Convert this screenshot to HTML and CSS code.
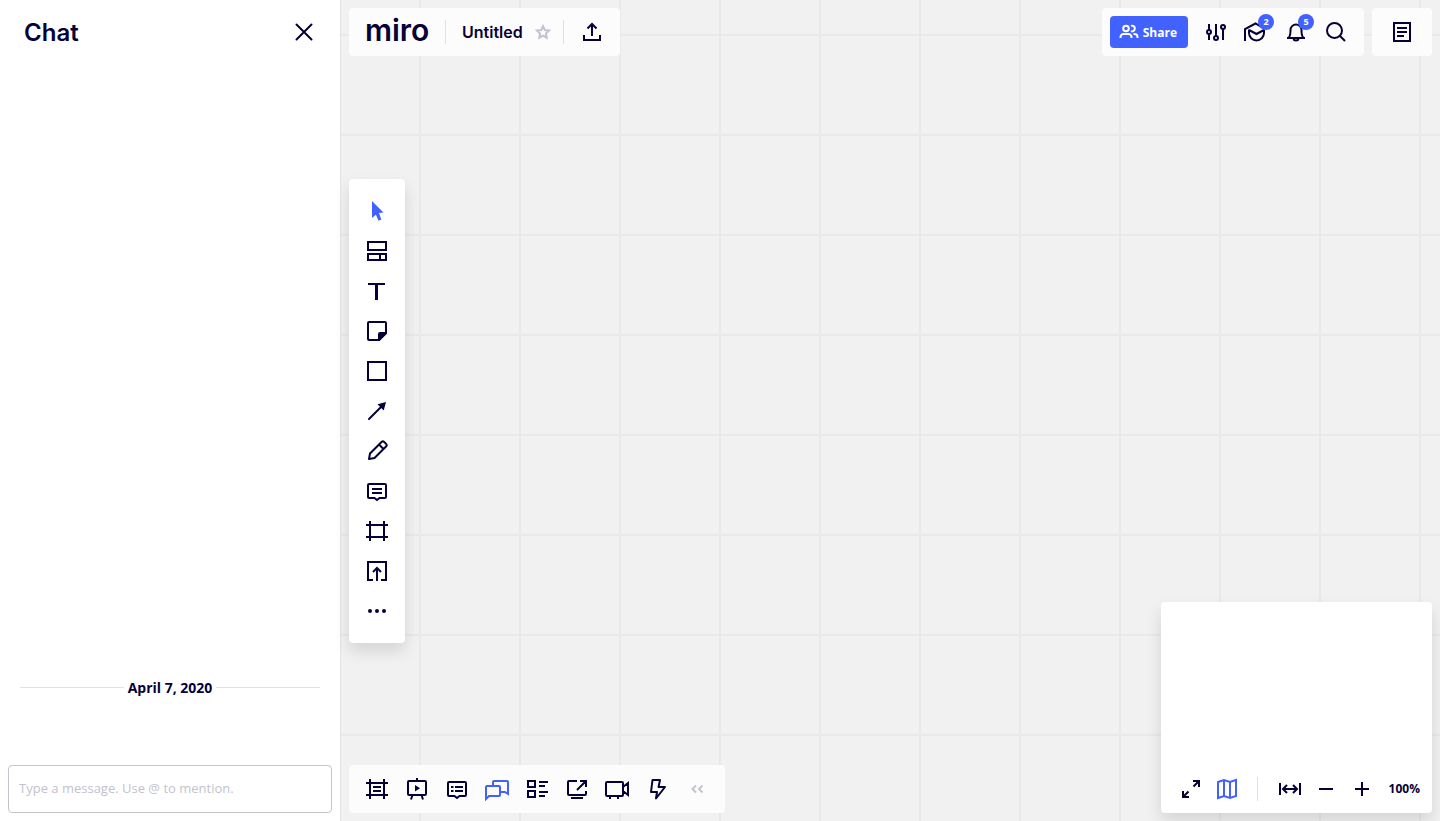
FILE: index.html
```
<!DOCTYPE html>
<html lang="en">
<head>
<meta charset="utf-8">
<title>Untitled board</title>
<link rel="stylesheet" href="styles.css">
</head>
<body>
<div class="app">
  <aside class="chat">
    <header class="chat-head">
      <h2 class="chat-title">Chat</h2>
      <button class="tool" aria-label="Close chat"><svg class="icon" viewBox="0 0 24 24"><path d="M4.500 4.500l15 15M19.500 4.500l-15 15" stroke-linecap="round"/></svg></button>
    </header>
    <div class="chat-log">
      <div class="chat-date"><span class="chat-day">April 7, 2020</span></div>
    </div>
    <form class="chat-form">
      <input class="chat-input" type="text" aria-label="Message" placeholder="Type a message. Use @ to mention.">
    </form>
  </aside>

  <main class="board">
    <div class="side side-left">
      <header class="bar board-head">
        <a class="logo" href="#">miro</a>
        <span class="divider"></span>
        <h1 class="board-name">Untitled</h1>
        <button class="star" aria-label="Star board"><svg class="star-icon" viewBox="0 0 16 16"><path d="M8 2.200l1.800 3.900 4.200.5-3.100 2.900.8 4.200L8 11.600l-3.700 2.100.8-4.200L2 6.600l4.200-.5z"/></svg></button>
        <span class="divider"></span>
        <button class="tool export" aria-label="Export"><svg class="icon" viewBox="0 0 24 24"><path d="M12 16V4M7.500 8.500L12 4l4.500 4.500M4 15v5h16v-5"/></svg></button>
      </header>

      <nav class="tools" aria-label="Tools">
        <button class="tool active" aria-label="Select"><svg class="icon" viewBox="0 0 24 24"><path class="solid" d="M7 2l11.500 11.500-4.500.5 2.300 6.500-2.800 1.200-2.600-6L7 19z"/></svg></button>
        <button class="tool" aria-label="Templates"><svg class="icon" viewBox="0 0 24 24"><path d="M3 3h18v8H3zM3 15h18v6H3zM15 15v6"/></svg></button>
        <button class="tool" aria-label="Text"><svg class="icon" viewBox="0 0 24 24"><rect class="solid" x="3" y="4" width="17" height="2"/><rect class="solid" x="10" y="4" width="3" height="17"/></svg></button>
        <button class="tool" aria-label="Sticky note"><svg class="icon" viewBox="0 0 24 24"><path d="M21 14V4a1 1 0 0 0-1-1H4a1 1 0 0 0-1 1v16a1 1 0 0 0 1 1h10z"/><path class="solid" d="M13 22v-7a2 2 0 0 1 2-2h7v1.500L14.500 22z"/></svg></button>
        <button class="tool" aria-label="Shape"><svg class="icon" viewBox="0 0 24 24"><path d="M3 3h18v18H3z"/></svg></button>
        <button class="tool" aria-label="Connection line"><svg class="icon" viewBox="0 0 24 24"><path d="M4 20L18 6" stroke-linecap="round"/><path class="solid" d="M21 3l-2.300 8.500-6.200-6.200z"/></svg></button>
        <button class="tool" aria-label="Pen"><svg class="icon" viewBox="0 0 24 24"><path stroke-linejoin="round" d="M4 20l1-5.500L16.800 2.700a1.500 1.500 0 0 1 2.100 0l2.400 2.400a1.500 1.500 0 0 1 0 2.100L9.500 19zM14 5.500l4.500 4.500"/></svg></button>
        <button class="tool" aria-label="Comment"><svg class="icon" viewBox="0 0 24 24"><path d="M4 5h16a1 1 0 0 1 1 1v12a1 1 0 0 1-1 1h-5.500L12 21l-2.500-2H4a1 1 0 0 1-1-1V6a1 1 0 0 1 1-1zM7 10h10M7 14h10"/></svg></button>
        <button class="tool" aria-label="Frame"><svg class="icon" viewBox="0 0 24 24"><path d="M5 2v20M19 2v20M1 6h22M1 18h22"/></svg></button>
        <button class="tool" aria-label="Upload"><svg class="icon" viewBox="0 0 24 24"><path d="M8 21H3V3h18v18h-5M12 22V9M8 13l4-4 4 4"/></svg></button>
        <button class="tool" aria-label="More"><svg class="icon" viewBox="0 0 24 24"><circle class="solid" cx="5" cy="12" r="2"/><circle class="solid" cx="12" cy="12" r="2"/><circle class="solid" cx="19" cy="12" r="2"/></svg></button>
      </nav>

      <nav class="bar dock" aria-label="Collaboration">
        <button class="tool" aria-label="Frames"><svg class="icon" viewBox="0 0 24 24"><path d="M5 2v20M19 2v20M1 6h22M1 18h22M8 10h8M8 14h8"/></svg></button>
        <button class="tool" aria-label="Presentation"><svg class="icon" viewBox="0 0 24 24"><path d="M4 4h16a1 1 0 0 1 1 1v12a1 1 0 0 1-1 1H4a1 1 0 0 1-1-1V5a1 1 0 0 1 1-1zM12 4V1M7.500 18L6 22.500M16.500 18l1.500 4.500"/><path class="solid" d="M10 8l5 3.300-5 3.200z"/></svg></button>
        <button class="tool" aria-label="Comments"><svg class="icon" viewBox="0 0 24 24"><path d="M4 5h16a1 1 0 0 1 1 1v12a1 1 0 0 1-1 1h-5.500L12 21l-2.500-2H4a1 1 0 0 1-1-1V6a1 1 0 0 1 1-1zM6 10h2.500M10 10h8M6 14h2.500M10 14h8"/></svg></button>
        <button class="tool active" aria-label="Chat"><svg class="icon" viewBox="0 0 24 24"><path d="M1 22V10a1 1 0 0 1 1-1h12a1 1 0 0 1 1 1v8a1 1 0 0 1-1 1H4zM8 9V5a1 1 0 0 1 1-1h13a1 1 0 0 1 1 1v12l-3-2h-5"/></svg></button>
        <button class="tool" aria-label="Cards"><svg class="icon" viewBox="0 0 24 24"><path d="M3 4h7v6H3zM3 14h7v6H3zM14 5h9M14 9h6M14 15h9M14 19h6"/></svg></button>
        <button class="tool" aria-label="Screen sharing"><svg class="icon" viewBox="0 0 24 24"><path d="M12 4H4a1 1 0 0 0-1 1v12a1 1 0 0 0 1 1h16a1 1 0 0 0 1-1v-3M6 21h12M12 13l9-9M15 4h6v6"/></svg></button>
        <button class="tool" aria-label="Video chat"><svg class="icon" viewBox="0 0 24 24"><path d="M2 5h15a1 1 0 0 1 1 1v12a1 1 0 0 1-1 1H2a1 1 0 0 1-1-1V6a1 1 0 0 1 1-1zM18 10l5-4v12l-5-4M5 19v3M13 19v3"/></svg></button>
        <button class="tool" aria-label="Activity"><svg class="icon" viewBox="0 0 24 24"><path d="M7.500 3H15l-1.500 7H20l-9 11.500L12 15H6z" stroke-linejoin="round"/></svg></button>
        <button class="tool muted" aria-label="Collapse"><svg class="icon" viewBox="0 0 24 24"><path d="M11 8.500L7.500 12l3.500 3.500M17.500 8.500L14 12l3.500 3.500"/></svg></button>
      </nav>
    </div>

    <div class="side side-right">
      <div class="top-right">
        <div class="bar actions">
          <button class="share"><svg class="share-icon" viewBox="0 0 20 16"><circle cx="7" cy="4.500" r="2.800"/><path d="M1.500 14v-1a3 3 0 0 1 3-3h5a3 3 0 0 1 3 3v1M12 1.900a2.800 2.800 0 1 1 0 5.200M14.500 10h1a3 3 0 0 1 3 3v1"/></svg>Share</button>
          <button class="tool" aria-label="Settings"><svg class="icon" viewBox="0 0 24 24"><path d="M5 4v5.500M5 14.500V20M12 4v11.500M19 9.500V20"/><circle cx="5" cy="12" r="2"/><circle cx="12" cy="18" r="2"/><circle cx="19" cy="7" r="2"/></svg></button>
          <button class="tool" aria-label="Learning center"><svg class="icon" viewBox="0 0 24 24"><path d="M1 21V9l10.500-5.500L20 8.500M5 10l7.500 4L20 10M5 9.500V13a7.500 7.500 0 0 0 15 0V9.500"/></svg><span class="badge">2</span></button>
          <button class="tool" aria-label="Notifications"><svg class="icon" viewBox="0 0 24 24"><path d="M3 18h18M4.500 18C6.500 16 6.500 14 6.500 10a5.500 5.500 0 0 1 11 0c0 4 0 6 2 8M9.500 18a2.500 2.500 0 0 0 5 0"/></svg><span class="badge">5</span></button>
          <button class="tool" aria-label="Search"><svg class="icon" viewBox="0 0 24 24"><circle cx="10.500" cy="10.500" r="7.500"/><path d="M16 16l5 5"/></svg></button>
        </div>
        <div class="bar notes">
          <button class="tool" aria-label="Notes"><svg class="icon" viewBox="0 0 24 24"><path d="M4 3h16v18H4zM7 8h10M7 12h10M7 16h7"/></svg></button>
        </div>
      </div>

      <section class="minimap" aria-label="Map">
        <div class="zoom-bar">
          <button class="tool small" aria-label="Full screen"><svg class="icon" viewBox="0 0 24 24"><path d="M14.500 9.500L20 4M14 4h6v6M9.500 14.500L4 20M4 14v6h6"/></svg></button>
          <button class="tool small active" aria-label="Toggle map"><svg class="icon" viewBox="0 0 24 24"><path d="M3 5l6-2 6 2 6-2v16l-6 2-6-2-6 2zM9 3v16M15 5v16"/></svg></button>
          <span class="divider"></span>
          <button class="tool small" aria-label="Fit to screen"><svg class="icon" viewBox="0 0 24 24"><path d="M2 6v12M22 6v12M5.500 12h13M9 8l-4 4 4 4M15 8l4 4-4 4"/></svg></button>
          <button class="tool small" aria-label="Zoom out"><svg class="icon" viewBox="0 0 24 24"><path d="M5 12h14"/></svg></button>
          <button class="tool small" aria-label="Zoom in"><svg class="icon" viewBox="0 0 24 24"><path d="M5 12h14M12 5v14"/></svg></button>
          <button class="zoom-level">100%</button>
        </div>
      </section>
    </div>
  </main>
</div>
</body>
</html>
```
FILE: styles.css
```
:root {
  --ink: #050038;
  --blue: #4262ff;
  --muted: #c3c2cf;
  --line: #e1e0e7;
}

* { box-sizing: border-box; }

body {
  margin: 0;
  color: var(--ink);
  font-family: "Open Sans", "Liberation Sans", sans-serif;
}

button {
  padding: 0;
  border: 0;
  background: none;
  color: inherit;
  font: inherit;
  cursor: pointer;
}

.app {
  display: flex;
  height: 100vh;
}

/* Chat panel */
.chat {
  display: flex;
  flex-direction: column;
  flex: none;
  width: 341px;
  border-right: 1px solid #e3e3e3;
  background: #fff;
}

.chat-head {
  display: flex;
  align-items: center;
  justify-content: space-between;
  height: 64px;
  padding: 0 16px 0 24px;
}

.chat-title {
  margin: 0;
  padding-top: 2px;
  font: 600 24px/32px Inter, sans-serif;
}

.chat-log {
  display: flex;
  flex: 1;
  flex-direction: column;
  justify-content: flex-end;
  padding: 0 20px 66px;
}

.chat-date {
  display: flex;
  align-items: center;
  gap: 4px;
  font-size: 14px;
  font-weight: 700;
  line-height: 22px;
}

.chat-day { padding-top: 2px; }

.chat-date::before,
.chat-date::after {
  flex: 1;
  height: 1px;
  background: var(--line);
  content: "";
}

.chat-form { padding: 0 8px 8px; }

.chat-input {
  display: block;
  width: 100%;
  height: 48px;
  padding: 0 10px 2px;
  border: 1px solid var(--muted);
  border-radius: 4px;
  color: var(--ink);
  font: 13px "Open Sans", sans-serif;
}

.chat-input::placeholder { color: var(--muted); }

/* Board */
.board {
  display: flex;
  flex: 1;
  justify-content: space-between;
  padding: 8px;
  background-color: #f1f1f1;
  background-image:
    linear-gradient(90deg, #e9e9e9 2px, transparent 2px),
    linear-gradient(#e9e9e9 2px, transparent 2px);
  background-position: 78px 34px;
  background-size: 100px 100px;
}

.side {
  display: flex;
  flex-direction: column;
  justify-content: space-between;
}

.side-left { align-items: flex-start; }
.side-right { align-items: flex-end; }

.bar {
  display: flex;
  align-items: center;
  height: 48px;
  padding: 0 8px;
  border-radius: 4px;
  background: #fcfcfc;
}

.divider {
  width: 1px;
  height: 24px;
  background: var(--line);
}

.tool {
  position: relative;
  display: flex;
  align-items: center;
  justify-content: center;
  width: 40px;
  height: 40px;
}

.small { width: 36px; }
.active { color: var(--blue); }
.muted { color: var(--muted); }

.icon {
  width: 24px;
  height: 24px;
  fill: none;
  stroke: currentColor;
  stroke-width: 2;
}

.solid {
  fill: currentColor;
  stroke: none;
}

/* Board header */
.board-head { padding-left: 16px; }

.logo {
  width: 64px;
  margin-right: 16px;
  padding-bottom: 4px;
  color: var(--ink);
  font: 600 30px/40px Inter, sans-serif;
  text-decoration: none;
}

.board-name {
  min-width: 64px;
  margin: 0 9px 0 16px;
  font: 600 16px/24px Inter, sans-serif;
}

.star {
  width: 16px;
  height: 16px;
  margin-right: 12px;
  color: var(--muted);
}

.star-icon {
  display: block;
  fill: none;
  stroke: currentColor;
  stroke-width: 2;
}

.export { margin-left: 8px; }

/* Toolbars */
.tools {
  width: 56px;
  padding: 12px 8px;
  border-radius: 4px;
  background: #fff;
  box-shadow: 0 8px 16px rgba(0, 0, 0, .12);
}

.top-right {
  display: flex;
  gap: 8px;
}

.notes { padding: 0 10px; }

.share {
  display: flex;
  align-items: center;
  gap: 4px;
  height: 32px;
  margin-right: 8px;
  padding: 0 11px 0 9px;
  border-radius: 4px;
  background: var(--blue);
  color: #fff;
  font-size: 12px;
  font-weight: 700;
}

.share-icon {
  width: 20px;
  height: 16px;
  fill: none;
  stroke: currentColor;
  stroke-width: 2;
}

.badge {
  position: absolute;
  top: 2px;
  left: 22px;
  width: 16px;
  height: 16px;
  border-radius: 50%;
  background: var(--blue);
  color: #fff;
  font-size: 9px;
  font-weight: 700;
  line-height: 16px;
  text-align: center;
}

/* Minimap */
.minimap {
  padding: 163px 12px 0;
  border-radius: 4px;
  background: #fff;
  box-shadow: 0 8px 16px rgba(0, 0, 0, .12);
}

.zoom-bar {
  display: flex;
  align-items: center;
  height: 48px;
}

.zoom-bar .divider {
  margin: 0 14px 0 12px;
}

.zoom-level {
  margin-left: 9px;
  padding-bottom: 2px;
  font-size: 12px;
  font-weight: 700;
}
```
